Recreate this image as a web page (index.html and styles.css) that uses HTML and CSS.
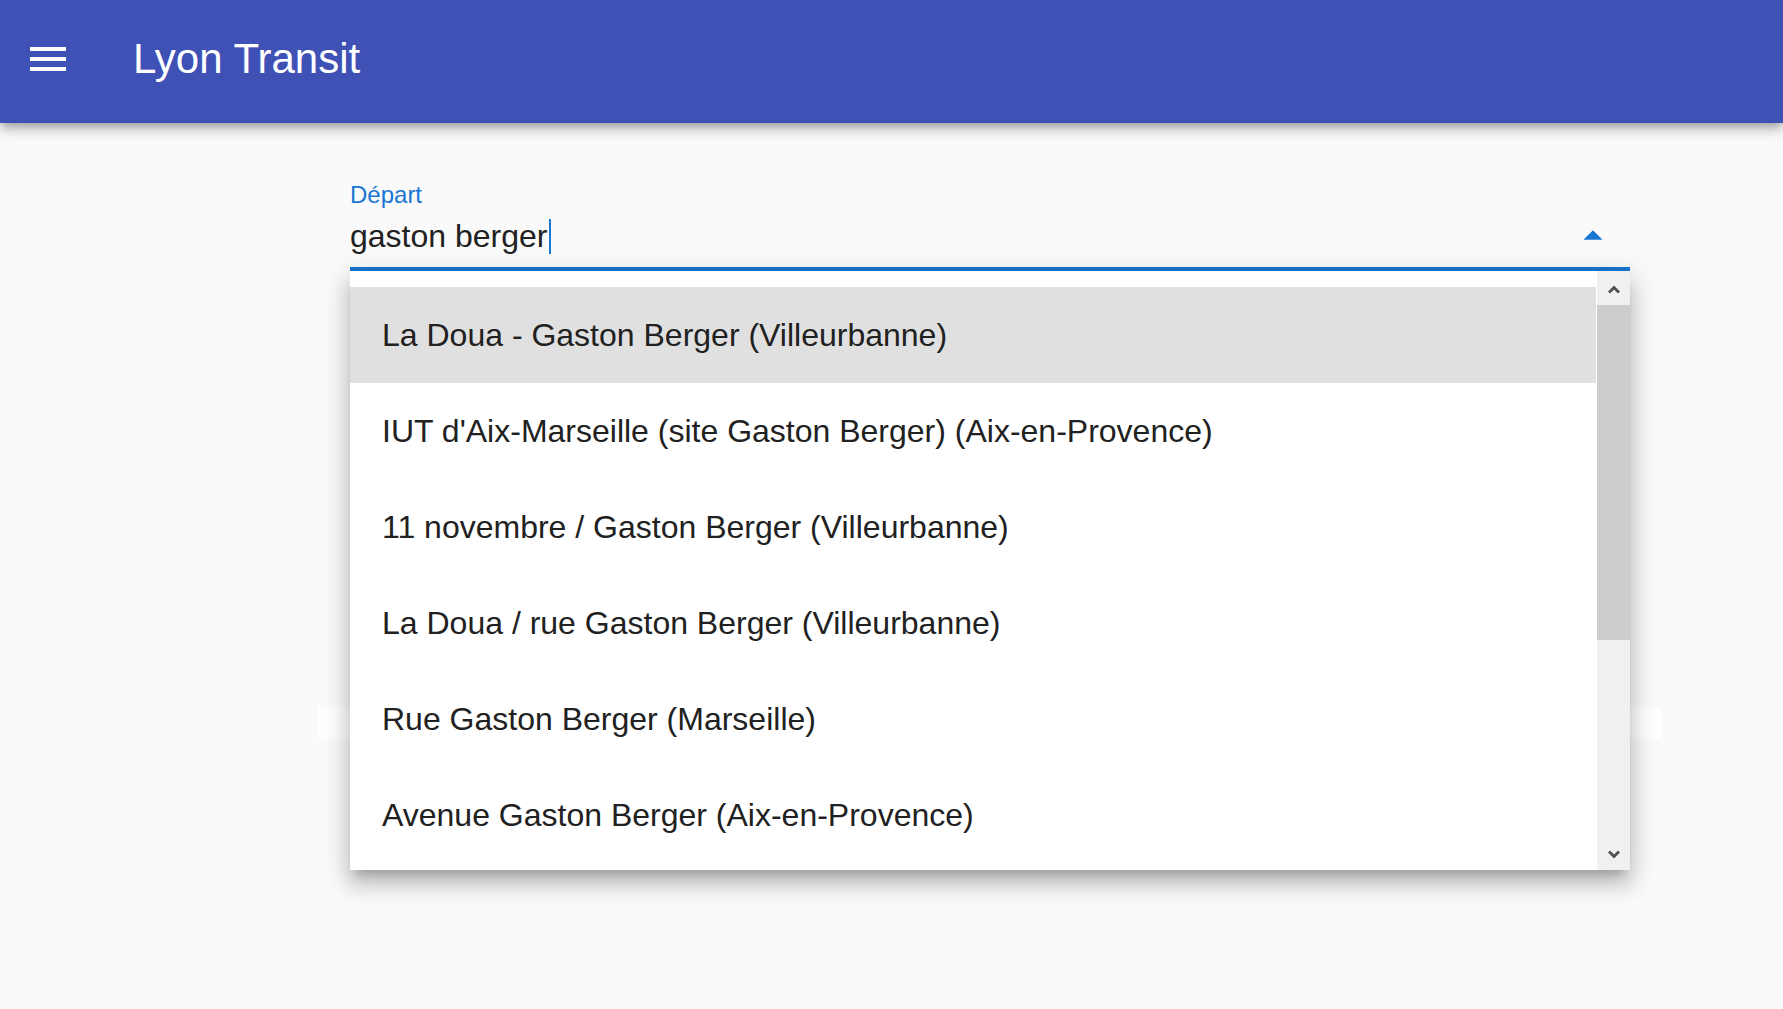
FILE: index.html
```html
<!DOCTYPE html>
<html lang="fr">
<head>
<meta charset="utf-8">
<title>Lyon Transit</title>
<link rel="stylesheet" href="styles.css">
</head>
<body>
<header class="appbar">
  <button class="menu-btn" aria-label="menu">
    <svg viewBox="0 0 24 24" width="48" height="48"><path fill="#fff" d="M3 18h18v-2H3v2zm0-5h18v-2H3v2zm0-7v2h18V6H3z"/></svg>
  </button>
  <h1 class="title">Lyon Transit</h1>
</header>
<main class="main">
  <div class="field">
    <label class="label">Départ</label>
    <div class="input-row">
      <div class="input-text">gaston berger<span class="caret"></span></div>
      <svg class="drop-icon" viewBox="0 0 24 24" width="46" height="46"><path fill="#1976d2" d="M7 14l5-5 5 5z"/></svg>
    </div>
    <div class="underline"></div>
    <div class="popup">
      <ul class="options">
        <li class="option active">La Doua - Gaston Berger (Villeurbanne)</li>
        <li class="option">IUT d'Aix-Marseille (site Gaston Berger) (Aix-en-Provence)</li>
        <li class="option">11 novembre / Gaston Berger (Villeurbanne)</li>
        <li class="option">La Doua / rue Gaston Berger (Villeurbanne)</li>
        <li class="option">Rue Gaston Berger (Marseille)</li>
        <li class="option">Avenue Gaston Berger (Aix-en-Provence)</li>
      </ul>
      <div class="scrollbar">
        <div class="sb-btn sb-up"><svg viewBox="0 0 12 10" width="12" height="10"><path d="M1 8.5L6 3.5L11 8.5" fill="none" stroke="#505050" stroke-width="3"/></svg></div>
        <div class="sb-track"><div class="sb-thumb"></div></div>
        <div class="sb-btn sb-down"><svg viewBox="0 0 12 10" width="12" height="10"><path d="M1 1.5L6 6.5L11 1.5" fill="none" stroke="#505050" stroke-width="3"/></svg></div>
      </div>
    </div>
  </div>
  <div class="behind"></div>
</main>
</body>
</html>
```
FILE: styles.css
```css
* { box-sizing: border-box; }
html, body { margin: 0; padding: 0; }
body {
  background: #fafafa;
  font-family: "Liberation Sans", Arial, sans-serif;
  color: #212121;
  width: 1783px;
  height: 1009px;
  overflow: hidden;
}
.appbar {
  height: 123px;
  background: #3f51b5;
  display: flex;
  align-items: center;
  padding: 0 0 5px 24px;
  box-shadow: 0 4px 8px -2px rgba(0,0,0,0.2), 0 8px 10px 0 rgba(0,0,0,0.14), 0 2px 19px 0 rgba(0,0,0,0.12);
  position: relative;
  z-index: 2;
}
.menu-btn {
  width: 48px;
  height: 48px;
  padding: 0;
  border: 0;
  background: none;
  display: block;
}
.menu-btn svg { display: block; }
.title {
  margin: 0 0 0 61px;
  font-weight: 400;
  font-size: 42px;
  line-height: 42px;
  color: #fff;
}
.main {
  padding: 60px 0 0 318px;
  width: 1661px;
}
.field {
  position: relative;
  margin: 0 31px 0 32px;
}
.label {
  display: block;
  font-size: 24px;
  line-height: 23px;
  color: #1976d2;
}
.input-row {
  display: flex;
  align-items: center;
  justify-content: space-between;
  padding: 11px 0 12px;
  height: 61px;
}
.input-text {
  font-size: 32px;
  line-height: 38px;
  color: #212121;
  white-space: nowrap;
}
.caret {
  display: inline-block;
  width: 2px;
  height: 35px;
  background: #1976d2;
  margin-left: 2px;
  vertical-align: -7px;
}
.drop-icon {
  display: block;
  margin-right: 14px;
  margin-top: -1px;
}
.underline {
  height: 4px;
  background: #1976d2;
}
.popup {
  position: absolute;
  left: 0;
  right: 0;
  top: 100%;
  height: 599px;
  background: #fff;
  display: flex;
  box-shadow: 0 10px 10px -6px rgba(0,0,0,0.2), 0 15px 19px 2px rgba(0,0,0,0.14), 0 6px 27px 4px rgba(0,0,0,0.12);
  z-index: 3;
}
.options {
  list-style: none;
  margin: 0;
  padding: 16px 0 0;
  flex: 1;
  overflow: hidden;
}
.option {
  height: 96px;
  display: flex;
  align-items: center;
  padding-left: 32px;
  font-size: 32px;
  color: #212121;
  white-space: nowrap;
}
.option.active { background: #e0e0e0; }
.scrollbar {
  width: 34px;
  border-left: 1px solid #fff;
  background: #f0f0f0;
  display: flex;
  flex-direction: column;
}
.sb-btn {
  height: 33px;
  display: flex;
  justify-content: center;
}
.sb-up { align-items: flex-start; padding-top: 13px; }
.sb-down { align-items: flex-start; padding-top: 13px; }
.sb-btn svg { display: block; }
.sb-track { flex: 1; padding-top: 1px; }
.sb-thumb {
  height: 335px;
  background: #cdcdcd;
}
.behind {
  margin-top: 436px;
  width: 1343px;
  height: 32px;
  background: #fff;
}
```
